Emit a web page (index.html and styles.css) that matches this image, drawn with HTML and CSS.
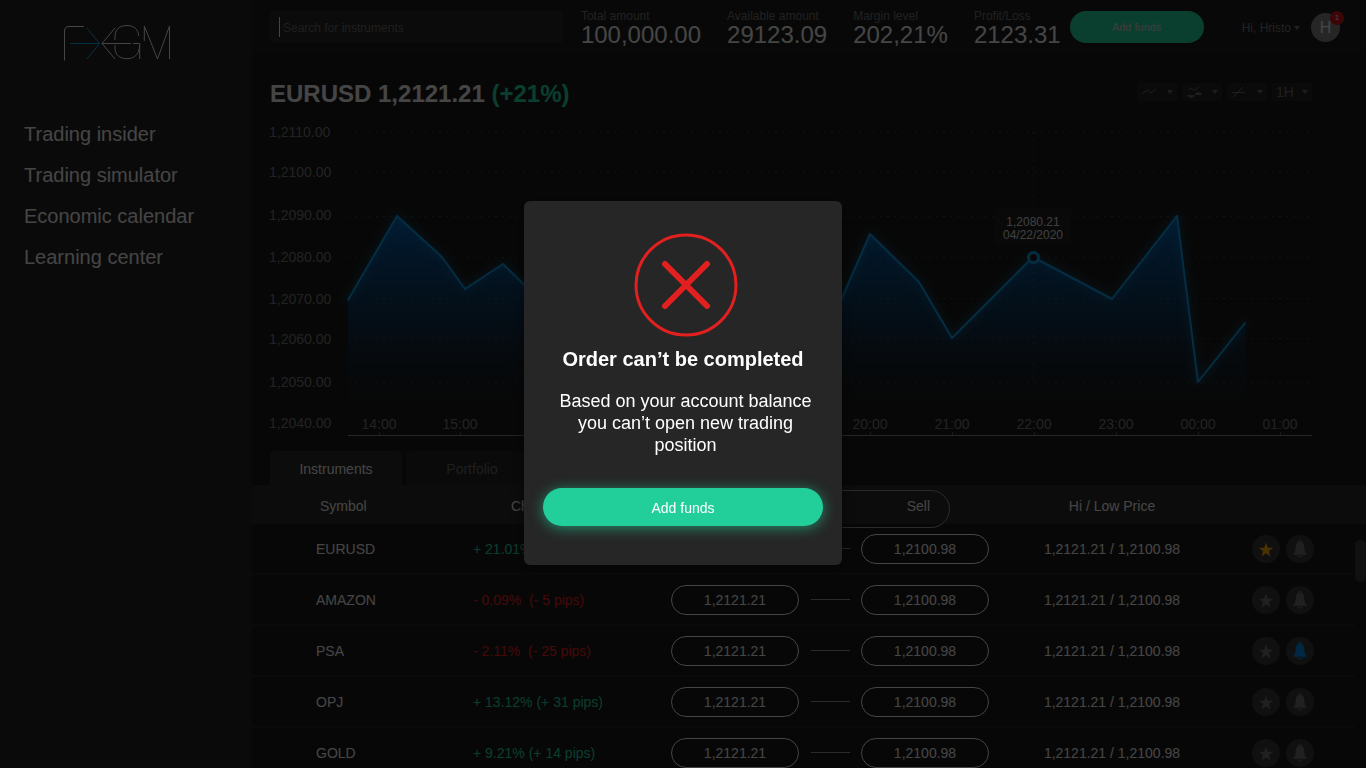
FILE: index.html
```
<!DOCTYPE html>
<html lang="en">
  <head>
    <meta charset="UTF-8" />
    <meta name="viewport" content="width=device-width, initial-scale=1.0" />
    <title>FXGM Trading</title>
    <link rel="stylesheet" href="styles.css">
  </head>
  <body>
    <!-- shared icons -->
    <svg class="sprite" aria-hidden="true">
      <symbol id="star" viewBox="0 0 28 28">
        <path d="M14 7.500l1.800 5.200h5.400l-4.300 3.300 1.500 5.500-4.400-3.200-4.400 3.200 1.500-5.500-4.300-3.300h5.400z" />
      </symbol>
      <symbol id="bell" viewBox="0 0 28 28">
        <path d="M14 6.500c2.700 0 4 2 4.200 5 .2 3.500.6 5.700 2.600 7.700v.6H7.200v-.6c2-2 2.400-4.200 2.600-7.700.2-3 1.500-5 4.200-5z" />
        <circle cx="14" cy="6.500" r="1.500" fill="none" stroke="currentColor" />
        <path d="M11.600 19.800a2.400 2.300 0 0 0 4.800 0" fill="none" stroke="currentColor" />
      </symbol>
    </svg>

    <div class="app">
      <aside class="sidebar">
        <a href="#" class="logo" aria-label="FXGM">
          <svg width="108" height="38" viewBox="63 24 108 38">
            <path d="M64.500 60.500V31q0-4.500 4.500-4.500h15M115 28l-13 15.500L115 59M102 43.500h29M115 40v-3c0-7 4-11.500 12-11.500 7 0 11.500 4 11.700 10.500M115 45v3c0 7 5 10.700 12 10.700 8 0 12.500-5.200 12.500-13M133 43.500h6.700V59M144.300 41V26l13.200 33 12-33v33" />
            <path class="logo-arrow" d="M70 43.500h29.500M87 28l12.500 15.500L87 59" />
          </svg>
        </a>
        <nav>
          <a href="#">Trading insider</a>
          <a href="#">Trading simulator</a>
          <a href="#">Economic calendar</a>
          <a href="#">Learning center</a>
        </nav>
      </aside>

      <main>
        <header class="topbar">
          <div class="search">
            <input type="text" placeholder="Search for instruments" aria-label="Search for instruments" />
          </div>
          <dl class="stats">
            <div><dt>Total amount</dt><dd>100,000.00</dd></div>
            <div><dt>Available amount</dt><dd>29123.09</dd></div>
            <div><dt>Margin level</dt><dd>202,21%</dd></div>
            <div><dt>Profit/Loss</dt><dd>2123.31</dd></div>
          </dl>
          <button class="btn btn-small">Add funds</button>
          <button class="user">
            <span class="user-name">Hi, Hristo</span>
            <span class="caret"></span>
            <span class="avatar">H<span class="badge">1</span></span>
          </button>
        </header>

        <section class="chart-section">
          <div class="chart-head">
            <h1>EURUSD 1,2121.21 <span class="up">(+21%)</span></h1>
            <div class="tools">
              <button aria-label="Chart type">
                <svg width="16" height="12" viewBox="0 0 16 12"><path d="M1 8l5-4 4 3 5-4" /></svg>
                <span class="caret"></span>
              </button>
              <button aria-label="Indicators">
                <svg width="16" height="12" viewBox="0 0 16 12"><path d="M2 4.500l3-2.500 3 2.500L13 1" /><path class="solid" d="M1 9h7.500q1.500-3 4-3t3.500 3H9q-1.500 3-4 3T1 9z" /></svg>
                <span class="caret"></span>
              </button>
              <button aria-label="Drawing tools">
                <svg width="16" height="12" viewBox="0 0 16 12"><path d="M1 6.500h13M2 11L12 1" /></svg>
                <span class="caret"></span>
              </button>
              <button>1H <span class="caret"></span></button>
            </div>
          </div>

          <svg class="chart" viewBox="0 0 1042 325" role="img" aria-label="EURUSD price chart">
            <defs>
              <linearGradient id="area" gradientUnits="userSpaceOnUse" x1="0" y1="96" x2="0" y2="282">
                <stop offset="0" stop-color="#065aa8" />
                <stop offset="0.500" stop-color="#064478" stop-opacity="0.600" />
                <stop offset="1" stop-color="#062c4c" stop-opacity="0" />
              </linearGradient>
            </defs>
            <g class="y-labels">
              <text x="-1" y="17">1,2110.00</text>
              <text x="-1" y="57">1,2100.00</text>
              <text x="-1" y="100">1,2090.00</text>
              <text x="-1" y="142">1,2080.00</text>
              <text x="-1" y="184">1,2070.00</text>
              <text x="-1" y="224">1,2060.00</text>
              <text x="-1" y="267">1,2050.00</text>
              <text x="-1" y="308">1,2040.00</text>
            </g>
            <path class="area" fill="url(#area)" d="M78 180L127 96l45 41 23 32 38-25 52 51 95-55 90 80 75 20 55-126 49 48 33 56 81-81 79 42 65-83 21 166 47-59v79H78z" />
            <path class="grid" d="M78 12.500h964M78 52.500h964M78 96.500h964M78 137.500h964M78 178.500h964M78 218.500h964M78 262.500h964M763.500 12v250" />
            <path class="line" d="M78 180L127 96l45 41 23 32 38-25 52 51 95-55 90 80 75 20 55-126 49 48 33 56 81-81 79 42 65-83 21 166 47-59" />
            <circle class="point" cx="763.500" cy="137.500" r="5" />
            <rect class="tip" x="725" y="89" width="76" height="36" />
            <g class="tip-text">
              <text x="763" y="106">1,2080.21</text>
              <text x="763" y="119">04/22/2020</text>
            </g>
            <path class="tick" d="M109.500 312v3M190.500 312v3M600.500 312v3M682.500 312v3M764.500 312v3M846.500 312v3M928.500 312v3M1010.500 312v3" />
            <path class="axis" d="M78 315.500h964" />
            <g class="x-labels">
              <text x="109" y="309">14:00</text>
              <text x="190" y="309">15:00</text>
              <text x="600" y="309">20:00</text>
              <text x="682" y="309">21:00</text>
              <text x="764" y="309">22:00</text>
              <text x="846" y="309">23:00</text>
              <text x="928" y="309">00:00</text>
              <text x="1010" y="309">01:00</text>
            </g>
          </svg>
        </section>

        <section class="market">
          <div class="tabs">
            <button class="tab active">Instruments</button>
            <button class="tab">Portfolio</button>
          </div>
          <div class="table-wrap">
            <table>
              <colgroup>
                <col class="col-symbol" />
                <col class="col-change" />
                <col class="col-price" />
                <col class="col-range" />
                <col />
              </colgroup>
              <thead>
                <tr>
                  <th class="symbol">Symbol</th>
                  <th class="change">Change</th>
                  <th class="price"><div class="switch"><span>Buy</span><span>Sell</span></div></th>
                  <th>Hi / Low Price</th>
                  <th></th>
                </tr>
              </thead>
              <tbody>
                <tr>
                  <td class="symbol">EURUSD</td>
                  <td class="up">+ 21.01% (+ 12 pips)</td>
                  <td><div class="quotes"><button>1,2121.21</button><i></i><button>1,2100.98</button></div></td>
                  <td class="range">1,2121.21 / 1,2100.98</td>
                  <td><div class="actions">
                    <button class="starred" aria-label="Favourite"><svg><use href="#star" /></svg></button>
                    <button aria-label="Alert"><svg><use href="#bell" /></svg></button>
                  </div></td>
                </tr>
                <tr>
                  <td class="symbol">AMAZON</td>
                  <td class="down">- 0.09%&nbsp; (- 5 pips)</td>
                  <td><div class="quotes"><button>1,2121.21</button><i></i><button>1,2100.98</button></div></td>
                  <td class="range">1,2121.21 / 1,2100.98</td>
                  <td><div class="actions">
                    <button aria-label="Favourite"><svg><use href="#star" /></svg></button>
                    <button aria-label="Alert"><svg><use href="#bell" /></svg></button>
                  </div></td>
                </tr>
                <tr>
                  <td class="symbol">PSA</td>
                  <td class="down">- 2.11%&nbsp; (- 25 pips)</td>
                  <td><div class="quotes"><button>1,2121.21</button><i></i><button>1,2100.98</button></div></td>
                  <td class="range">1,2121.21 / 1,2100.98</td>
                  <td><div class="actions">
                    <button aria-label="Favourite"><svg><use href="#star" /></svg></button>
                    <button class="alerted" aria-label="Alert"><svg><use href="#bell" /></svg></button>
                  </div></td>
                </tr>
                <tr>
                  <td class="symbol">OPJ</td>
                  <td class="up">+ 13.12% (+ 31 pips)</td>
                  <td><div class="quotes"><button>1,2121.21</button><i></i><button>1,2100.98</button></div></td>
                  <td class="range">1,2121.21 / 1,2100.98</td>
                  <td><div class="actions">
                    <button aria-label="Favourite"><svg><use href="#star" /></svg></button>
                    <button aria-label="Alert"><svg><use href="#bell" /></svg></button>
                  </div></td>
                </tr>
                <tr>
                  <td class="symbol">GOLD</td>
                  <td class="up">+ 9.21% (+ 14 pips)</td>
                  <td><div class="quotes"><button>1,2121.21</button><i></i><button>1,2100.98</button></div></td>
                  <td class="range">1,2121.21 / 1,2100.98</td>
                  <td><div class="actions">
                    <button aria-label="Favourite"><svg><use href="#star" /></svg></button>
                    <button aria-label="Alert"><svg><use href="#bell" /></svg></button>
                  </div></td>
                </tr>
              </tbody>
            </table>
            <div class="scrollbar"><div class="thumb"></div></div>
          </div>
        </section>
      </main>
    </div>

    <div class="overlay">
      <div class="modal" role="dialog" aria-modal="true" aria-labelledby="modal-title">
        <div class="error-icon">
          <svg width="104" height="104" viewBox="0 0 104 104">
            <circle cx="52" cy="52" r="50" stroke-width="3" />
            <path d="M31 31l42 42M73 31L31 73" stroke-width="6" stroke-linecap="round" />
          </svg>
        </div>
        <h2 id="modal-title">Order can’t be completed</h2>
        <p>Based on your account balance you can’t open new trading position</p>
        <button class="btn btn-wide">Add funds</button>
      </div>
    </div>
  </body>
</html>
```
FILE: styles.css
```
* {
  box-sizing: border-box;
}
body {
  margin: 0;
  height: 100vh;
  overflow: hidden;
  background-color: #1a1a1a;
  color: #e6e6e6;
  font-family: "Liberation Sans", Arial, sans-serif;
  font-size: 14px;
}
button,
input {
  font: inherit;
  color: inherit;
  border: none;
  background: none;
  padding: 0;
}
button {
  cursor: pointer;
}
a {
  color: inherit;
  text-decoration: none;
}
.sprite {
  display: none;
}
.up {
  color: #22cf9b;
}
.down {
  color: #e02020;
}
.caret {
  border: 3px solid transparent;
  border-top: 4px solid currentColor;
  border-bottom: none;
}

.app {
  display: grid;
  grid-template-columns: 252px 1fr;
  min-height: 100vh;
}

/* sidebar */
.sidebar {
  background-color: #222;
  padding-top: 24px;
}
.logo {
  display: block;
  margin-left: 63px;
  height: 38px;
}
.logo path {
  fill: none;
  stroke: #e6e6e6;
}
.logo .logo-arrow {
  stroke: #14a8e8;
}
nav {
  display: flex;
  flex-direction: column;
  gap: 17px;
  padding: 60px 24px;
  font-size: 20px;
  line-height: 24px;
}

/* top bar */
.topbar {
  display: flex;
  align-items: flex-start;
  height: 53px;
  padding: 9px 26px 0 18px;
  background-color: #1c1c1c;
}
.search {
  display: flex;
  align-items: center;
  flex: 1;
  height: 32px;
  margin-top: 2px;
  padding-left: 9px;
  border-radius: 4px;
  background-color: #262626;
}
.search::before {
  content: "";
  width: 1px;
  height: 20px;
  background-color: #e6e6e6;
}
.search input {
  flex: 1;
  min-width: 0;
  padding: 2px 0 0 3px;
  font-size: 12px;
}
.search input::placeholder {
  color: #666;
}
.stats {
  display: flex;
  gap: 26px;
  margin: 0 9px 0 18px;
}
.stats dt {
  color: #707070;
  font-size: 12px;
  line-height: 14px;
  white-space: nowrap;
}
.stats dd {
  margin: 0;
  font-size: 24px;
  line-height: 24px;
}
.btn {
  border-radius: 20px;
  background-color: #22cf9b;
  color: white;
}
.btn-small {
  width: 134px;
  height: 32px;
  margin-top: 2px;
  font-size: 11px;
  color: #d0d0d0;
}
.user {
  display: flex;
  align-items: center;
  margin: 4px 0 0 38px;
  color: #747474;
  font-size: 12px;
}
.user .caret {
  margin: 0 11px 0 3px;
}
.avatar {
  position: relative;
  width: 29px;
  height: 29px;
  border-radius: 50%;
  background-color: #808080;
  color: #e6e6e6;
  font-size: 16px;
  line-height: 30px;
}
.badge {
  position: absolute;
  top: -2px;
  right: -4px;
  width: 14px;
  height: 14px;
  border-radius: 50%;
  background-color: #c81414;
  font-size: 8px;
  line-height: 14px;
}

/* chart */
.chart-section {
  padding: 27px 54px 0 18px;
}
.chart-head {
  display: flex;
  justify-content: space-between;
  align-items: flex-start;
}
h1 {
  margin: 0;
  font-size: 24px;
  line-height: 28px;
}
.tools {
  display: flex;
  gap: 5px;
  padding-top: 3px;
  color: #666;
}
.tools button {
  display: flex;
  align-items: center;
  justify-content: space-between;
  width: 40px;
  height: 18px;
  padding: 0 4px;
  border-radius: 2px;
  background-color: #242424;
}
.tools svg {
  fill: none;
  stroke: currentColor;
}
.tools .solid {
  fill: currentColor;
  stroke: none;
}
.chart {
  display: block;
  width: 100%;
  margin-top: 12px;
  overflow: visible;
}
.chart text {
  fill: #747474;
  font-size: 14px;
}
.x-labels,
.tip-text {
  text-anchor: middle;
}
.chart .tip-text text {
  fill: #d8d8d8;
  font-size: 12px;
}
.grid {
  fill: none;
  stroke: #808080;
  stroke-opacity: 0.3;
  stroke-dasharray: 2 5;
}
.line {
  fill: none;
  stroke: #1296da;
  stroke-width: 2;
  stroke-linejoin: round;
  stroke-linecap: round;
  filter: drop-shadow(0 0 4px #1080c0);
}
.point {
  fill: #1a1a1a;
  stroke: #1296da;
  stroke-width: 3;
}
.tip {
  fill: #1e1e1e;
}
.axis {
  fill: none;
  stroke: #808080;
}
.tick {
  fill: none;
  stroke: #505050;
}

/* instruments */
.tabs {
  display: flex;
  gap: 4px;
  margin-top: 6px;
  padding-left: 18px;
}
.tab {
  width: 132px;
  height: 34px;
  padding-top: 2px;
  border-radius: 5px 5px 0 0;
  background-color: #222;
  color: #666;
}
.tab.active {
  background-color: #282828;
  color: #e6e6e6;
}
.table-wrap {
  position: relative;
}
table {
  width: 100%;
  table-layout: fixed;
  border-spacing: 0;
}
.col-symbol {
  width: 221px;
}
.col-change {
  width: 198px;
}
.col-price {
  width: 318px;
}
.col-range {
  width: 246px;
}
th,
td {
  padding: 0;
}
th {
  height: 39px;
  padding-top: 3px;
  background-color: #282828;
  font-weight: normal;
}
td {
  height: 51px;
  border-bottom: 2px solid #222;
}
td.symbol {
  padding-left: 64px;
}
th.symbol {
  padding-left: 68px;
  text-align: left;
}
th.change {
  padding-left: 38px;
  text-align: left;
}
th.price {
  position: relative;
}
.switch {
  position: absolute;
  top: 5px;
  right: 39px;
  left: 39px;
  display: flex;
  justify-content: space-between;
  height: 38px;
  padding: 0 19px;
  border: 1px solid #909090;
  border-radius: 19px;
  line-height: 30px;
}
.quotes {
  display: flex;
  justify-content: space-between;
  align-items: center;
}
.quotes button {
  width: 128px;
  height: 30px;
  border: 1px solid #e6e6e6;
  border-radius: 15px;
}
.quotes i {
  width: 39px;
  height: 1px;
  background-color: #909090;
}
.range {
  text-align: center;
}
.actions {
  display: flex;
  justify-content: flex-end;
  gap: 6px;
  padding-right: 52px;
}
.actions button {
  width: 28px;
  height: 28px;
  border-radius: 50%;
  background-color: #363636;
  color: #6c6c6c;
}
.actions svg {
  display: block;
  width: 28px;
  height: 28px;
  fill: currentColor;
}
.actions .starred {
  color: #f0a800;
}
.actions .alerted {
  color: #0088e8;
}
.scrollbar {
  position: absolute;
  top: 39px;
  right: 0;
  bottom: 0;
  width: 11px;
  padding-top: 16px;
  background-color: #1a1a1a;
}
.thumb {
  height: 42px;
  border-radius: 5px;
  background-color: #363636;
}

/* modal */
.overlay {
  position: fixed;
  inset: 0;
  display: flex;
  justify-content: center;
  align-items: center;
  padding-bottom: 2px;
  background-color: rgba(0, 0, 0, 0.7);
}
.modal {
  width: 318px;
  padding: 32px 19px 39px;
  border-radius: 6px;
  background-color: #262626;
  box-shadow: 0 2px 16px rgba(0, 0, 0, 0.5);
  color: white;
  text-align: center;
}
.error-icon,
.modal p {
  padding-left: 5px;
}
.error-icon svg {
  display: block;
  margin: 0 auto;
  fill: none;
  stroke: #e22020;
}
.modal h2 {
  margin: 10px 0 19px;
  font-size: 20px;
  line-height: 24px;
}
.modal p {
  margin: 0 0 32px;
  font-size: 18px;
  line-height: 22px;
}
.btn-wide {
  width: 100%;
  height: 38px;
  padding-top: 2px;
  box-shadow: 0 2px 14px rgba(34, 207, 155, 0.6);
}
```
